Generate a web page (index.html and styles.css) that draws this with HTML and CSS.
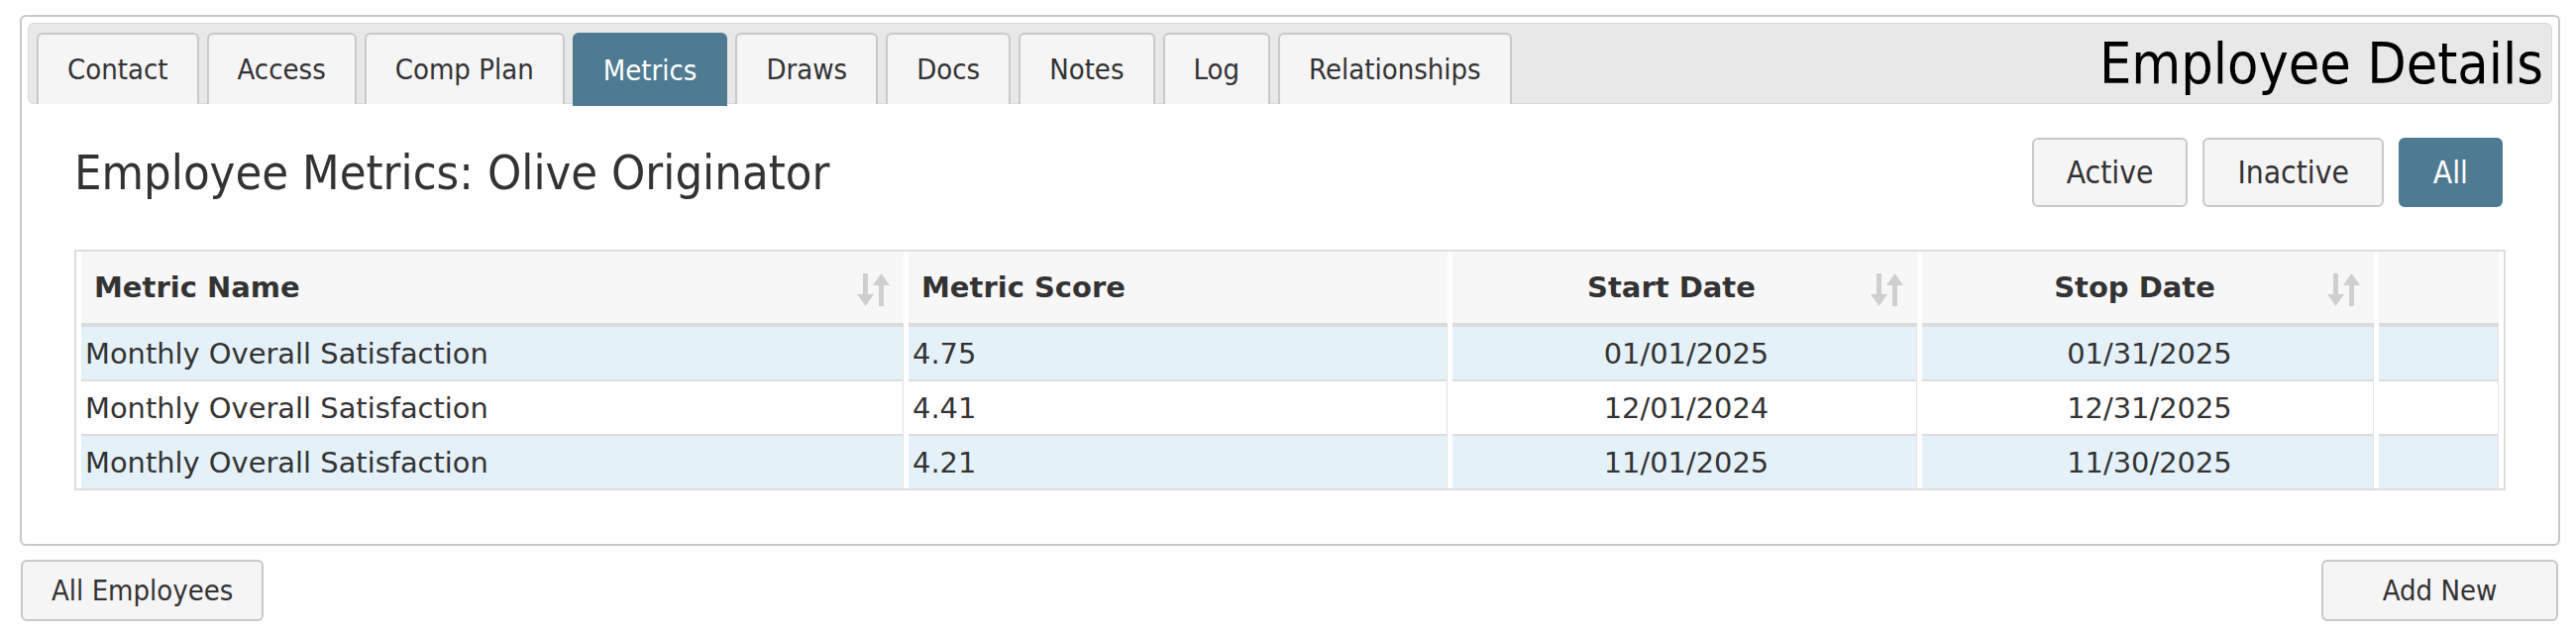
FILE: index.html
```html
<!DOCTYPE html>
<html lang="en">
<head>
    <meta charset="UTF-8">
    <meta name="viewport" content="width=device-width, initial-scale=1.0">
    <title>Employee Details</title>
    <link rel="stylesheet" href="styles.css">
</head>
<body>
    <div class="panel">
        <div class="tabbar">
            <a class="tab" href="#">Contact</a>
            <a class="tab" href="#">Access</a>
            <a class="tab" href="#">Comp Plan</a>
            <a class="tab active" href="#">Metrics</a>
            <a class="tab" href="#">Draws</a>
            <a class="tab" href="#">Docs</a>
            <a class="tab" href="#">Notes</a>
            <a class="tab" href="#">Log</a>
            <a class="tab" href="#">Relationships</a>
            <h1 class="page-title">Employee Details</h1>
        </div>

        <div class="content">
            <div class="content-head">
                <h2>Employee Metrics: Olive Originator</h2>
                <div class="filters">
                    <button class="btn">Active</button>
                    <button class="btn">Inactive</button>
                    <button class="btn selected">All</button>
                </div>
            </div>

            <table class="metrics">
                <thead>
                    <tr>
                        <th class="col-name sortable">Metric Name
                            <svg class="sort" viewBox="0 0 33 33"><rect x="6" y="0" width="5" height="23"/><polygon points="0,21 17,21 8.5,33"/><rect x="22" y="10" width="5" height="23"/><polygon points="16,12 33,12 24.5,0"/></svg>
                        </th>
                        <th class="col-score">Metric Score</th>
                        <th class="col-date center sortable">Start Date
                            <svg class="sort" viewBox="0 0 33 33"><rect x="6" y="0" width="5" height="23"/><polygon points="0,21 17,21 8.5,33"/><rect x="22" y="10" width="5" height="23"/><polygon points="16,12 33,12 24.5,0"/></svg>
                        </th>
                        <th class="col-date2 center sortable">Stop Date
                            <svg class="sort" viewBox="0 0 33 33"><rect x="6" y="0" width="5" height="23"/><polygon points="0,21 17,21 8.5,33"/><rect x="22" y="10" width="5" height="23"/><polygon points="16,12 33,12 24.5,0"/></svg>
                        </th>
                        <th></th>
                    </tr>
                </thead>
                <tbody>
                    <tr>
                        <td>Monthly Overall Satisfaction</td>
                        <td>4.75</td>
                        <td class="center">01/01/2025</td>
                        <td class="center">01/31/2025</td>
                        <td></td>
                    </tr>
                    <tr>
                        <td>Monthly Overall Satisfaction</td>
                        <td>4.41</td>
                        <td class="center">12/01/2024</td>
                        <td class="center">12/31/2025</td>
                        <td></td>
                    </tr>
                    <tr>
                        <td>Monthly Overall Satisfaction</td>
                        <td>4.21</td>
                        <td class="center">11/01/2025</td>
                        <td class="center">11/30/2025</td>
                        <td></td>
                    </tr>
                </tbody>
            </table>
        </div>
    </div>

    <div class="footer">
        <button class="btn btn-foot">All Employees</button>
        <button class="btn btn-foot">Add New</button>
    </div>
</body>
</html>
```

FILE: styles.css
```css
* {
    box-sizing: border-box;
}
body {
    margin: 0;
    padding: 15px 16px 0 20px;
    font-family: "DejaVu Sans Condensed", "DejaVu Sans", sans-serif;
    font-stretch: condensed;
    color: #333;
    background: #fff;
}
.panel {
    border: 2px solid #c8c8c8;
    border-radius: 6px;
    padding: 6px 6px 54px 6px;
}
.tabbar {
    display: flex;
    align-items: flex-end;
    height: 82px;
    padding: 0 8px;
    background: #e8e8e8;
    border: 1px solid #dadada;
    border-radius: 6px;
}
.tab {
    display: flex;
    align-items: center;
    height: 72px;
    margin-right: 8px;
    margin-bottom: -1px;
    padding: 0 29px;
    background: #f5f5f5;
    border: 2px solid #c9c9c9;
    border-bottom: none;
    border-radius: 6px 6px 0 0;
    color: #333;
    font-size: 29px;
    text-decoration: none;
}
.tab.active {
    height: 74px;
    margin-bottom: -3px;
    background: #4e7b92;
    border-color: #4e7b92;
    color: #fff;
}
.page-title {
    margin: 0 0 0 auto;
    align-self: center;
    padding-right: 0;
    font-size: 57px;
    font-weight: normal;
    color: #000;
}
.content {
    padding: 0 47px;
}
.content-head {
    display: flex;
    justify-content: space-between;
    align-items: center;
    margin-top: 34px;
    margin-bottom: 43px;
}
.content-head h2 {
    margin: 0;
    font-size: 48.5px;
    font-weight: normal;
    color: #333;
}
.filters {
    display: flex;
    gap: 15px;
    margin-right: 3px;
}
.btn {
    height: 70px;
    padding: 0 33px;
    background: #f5f5f5;
    border: 2px solid #c9c9c9;
    border-radius: 6px;
    color: #333;
    font-family: inherit;
    font-stretch: condensed;
    font-size: 31.5px;
    cursor: pointer;
}
.btn.selected {
    background: #4e7b92;
    border-color: #4e7b92;
    color: #fff;
}
.metrics {
    width: 100%;
    border: 2px solid #ddd;
    border-collapse: separate;
    border-spacing: 5px 0;
    font-family: "DejaVu Sans", sans-serif;
    font-stretch: normal;
    font-size: 28.9px;
    color: #333;
}
.metrics th {
    position: relative;
    height: 76px;
    padding: 0 13px;
    background: #f7f7f7;
    border-bottom: 4px solid #dcdcdc;
    text-align: left;
    font-size: 29px;
    font-weight: bold;
}
.metrics td {
    height: 55px;
    padding: 0 0 0 4px;
    border-bottom: 2px solid #dedede;
    border-right: 1px solid #e4e4e4;
}
.metrics tbody tr:nth-child(odd) td {
    background: #e5f1f8;
}
.metrics tbody tr:last-child td {
    height: 53px;
    border-bottom: none;
}
.metrics .center {
    text-align: center;
    padding-right: 0;
}
.metrics th.center {
    padding-right: 40px;
}
.col-name {
    width: 830px;
}
.col-score {
    width: 544px;
}
.col-date {
    width: 469px;
}
.col-date2 {
    width: 456px;
}
.sort {
    position: absolute;
    right: 14px;
    top: 22px;
    width: 33px;
    height: 33px;
    fill: #cfcfcf;
}
.footer {
    display: flex;
    justify-content: space-between;
    margin: 14px 2px 0 1px;
}
.btn-foot {
    height: 62px;
    min-width: 239px;
    padding: 0 29px;
    font-size: 29px;
}
```
